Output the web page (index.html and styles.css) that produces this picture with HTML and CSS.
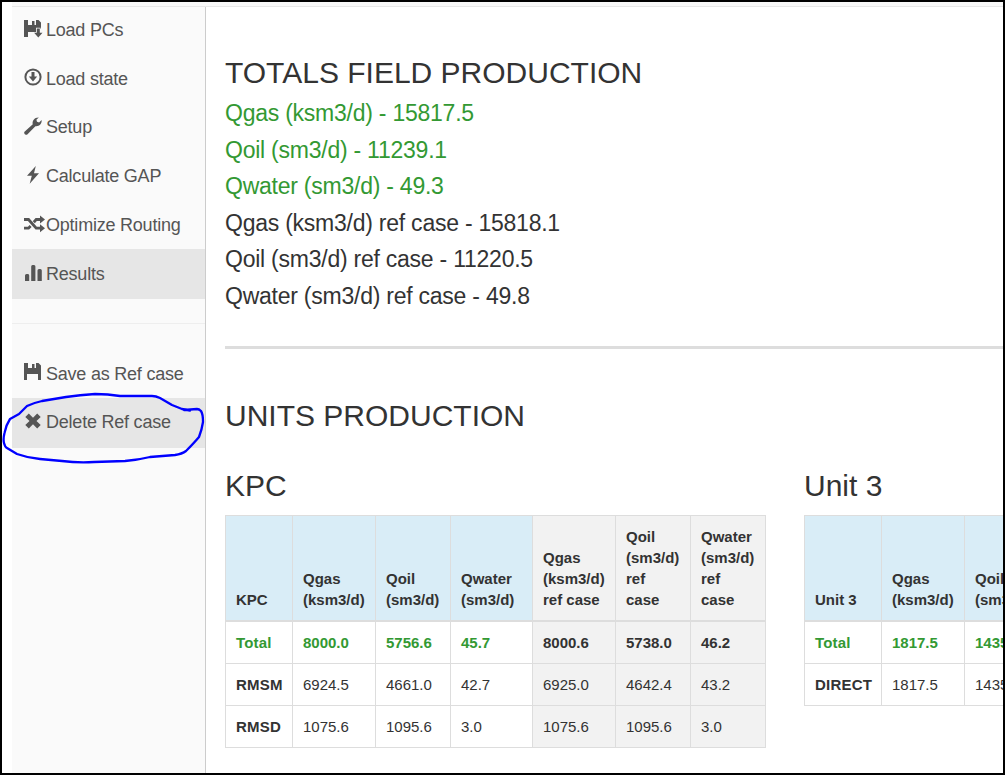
FILE: index.html
```html
<!DOCTYPE html>
<html lang="en">
<head>
<meta charset="utf-8">
<title>Results</title>
<link rel="stylesheet" href="styles.css">
</head>
<body>
<div class="frame">
  <header class="topbar"></header>
  <div class="layout">
    <nav class="sidebar">
      <a class="item"><svg class="icon wide" viewBox="0 0 22 18"><path d="M0 0H4V5H8V1H10.5V5H12V0H14.5L17 2.5V9H12V12H4V17H0Z"/><path class="halo" d="M12.8 8.5H15.8V12.8H18.5L14.3 17.6L10.1 12.8H12.8Z"/></svg><span>Load PCs</span></a>
      <a class="item"><svg class="icon" viewBox="0 0 22 18"><circle class="ring" cx="9" cy="9" r="7.6"/><path d="M7.5 4H10.5V8.5H13.2L9 13.6L4.8 8.5H7.5Z"/></svg><span>Load state</span></a>
      <a class="item"><svg class="icon" viewBox="0 0 22 18"><path d="M.5 14.7L8.8 7.3C7.8 3.8 10.5.2 14.8.4L12.4 2.8L13 4.8L15.1 5.4L17.6 3.1C18.2 7 14.8 9.8 11.4 9.2L3.3 17.4C1.8 18.6-.7 16.3.5 14.7Z"/></svg><span>Setup</span></a>
      <a class="item"><svg class="icon" viewBox="0 0 22 18"><path d="M11.8 0L3 9.8H7.8L5.7 17.8L15 7.2H10Z"/></svg><span>Calculate GAP</span></a>
      <a class="item"><svg class="icon wide" viewBox="0 0 22 18"><path class="line" d="M0 4.5H4.5L12.2 13.2H17M0 13.2H4.5L6.6 11M9.8 7.2L12.2 4.5H17"/><path d="M16 .5L21 4.5L16 8.5ZM16 9.2L21 13.2L16 17.2Z"/></svg><span>Optimize Routing</span></a>
      <a class="item active"><svg class="icon" viewBox="0 0 22 18"><path d="M1 11.5Q1 10 2.5 10H4Q5.2 10 5.2 11.5V17H1ZM7.2 2.5Q7.2 1 8.5 1H10Q11.4 1 11.4 2.5V17H7.2ZM13.5 6.5Q13.5 5 15 5H16.3Q17.8 5 17.8 6.5V17H13.5Z"/></svg><span>Results</span></a>
      <hr class="divider">
      <a class="item"><svg class="icon wide" viewBox="0 0 22 18"><path d="M0 0H4V5H8V1H10.5V5H12V0H14.5L17 2.5V17H14V11H3V17H0Z"/></svg><span>Save as Ref case</span></a>
      <a class="item active"><svg class="icon" viewBox="0 0 22 18"><path d="M4.8 1.5L9 5.7L13.2 1.5L16.7 5L12.5 9L16.7 13L13.2 16.5L9 12.3L4.8 16.5L1.3 13L5.5 9L1.3 5Z"/></svg><span>Delete Ref case</span></a>
    </nav>
    <main class="content">
      <h2 class="title">TOTALS FIELD PRODUCTION</h2>
      <div class="totals">
        <p class="current">Qgas (ksm3/d) - 15817.5</p>
        <p class="current">Qoil (sm3/d) - 11239.1</p>
        <p class="current">Qwater (sm3/d) - 49.3</p>
        <p>Qgas (ksm3/d) ref case - 15818.1</p>
        <p>Qoil (sm3/d) ref case - 11220.5</p>
        <p>Qwater (sm3/d) ref case - 49.8</p>
      </div>
      <hr class="rule">
      <h2 class="title units-title">UNITS PRODUCTION</h2>
      <div class="units">
        <section class="unit kpc">
          <h2 class="title">KPC</h2>
          <table>
            <colgroup><col class="c67"><col class="c83"><col class="c75"><col class="c82"><col class="c83"><col class="c75"><col class="c75"></colgroup>
            <thead><tr><th>KPC</th><th>Qgas<br>(ksm3/d)</th><th>Qoil<br>(sm3/d)</th><th>Qwater<br>(sm3/d)</th><th class="ref">Qgas<br>(ksm3/d)<br>ref case</th><th class="ref">Qoil<br>(sm3/d)<br>ref<br>case</th><th class="ref">Qwater<br>(sm3/d)<br>ref<br>case</th></tr></thead>
            <tbody>
              <tr class="total"><th>Total</th><td>8000.0</td><td>5756.6</td><td>45.7</td><td class="ref">8000.6</td><td class="ref">5738.0</td><td class="ref">46.2</td></tr>
              <tr><th>RMSM</th><td>6924.5</td><td>4661.0</td><td>42.7</td><td class="ref">6925.0</td><td class="ref">4642.4</td><td class="ref">43.2</td></tr>
              <tr><th>RMSD</th><td>1075.6</td><td>1095.6</td><td>3.0</td><td class="ref">1075.6</td><td class="ref">1095.6</td><td class="ref">3.0</td></tr>
            </tbody>
          </table>
        </section>
        <section class="unit unit3">
          <h2 class="title">Unit 3</h2>
          <table>
            <colgroup><col class="c77"><col class="c83"><col class="c75"></colgroup>
            <thead><tr><th>Unit 3</th><th>Qgas<br>(ksm3/d)</th><th>Qoil<br>(sm3/d)</th></tr></thead>
            <tbody>
              <tr class="total"><th>Total</th><td>1817.5</td><td>1435</td></tr>
              <tr><th>DIRECT</th><td>1817.5</td><td>1435</td></tr>
            </tbody>
          </table>
        </section>
      </div>
    </main>
  </div>
  <svg class="marker" viewBox="0 0 220 90"><path d="M190 29.5L182 28L172 24L160 17Q156 15 152 15H120Q108 13 95 13Q80 14 66 16L42 20Q33 22 27 25L19 33L10 38Q6 44 4.5 52Q3 58 4 62Q5 66 7 67L17 73Q28 77 40 78L62 80Q78 82 94 81L125 80Q138 79 150 76L175 74Q182 73 186 70Q194 62 199 56Q202 48 203 41Q203 33 201 30Q199 28 197 28L184 29"/></svg>
</div>
</body>
</html>
```
FILE: styles.css
```css
* { box-sizing: border-box; }
body { margin: 0; background: #fff; color: #333; font-family: "Liberation Sans", Arial, sans-serif; }
.frame { position: relative; width: 1005px; height: 775px; border: 2px solid #000; overflow: hidden; display: flex; flex-direction: column; }
.topbar { height: 5px; flex: none; margin-left: 10px; background: #f8f8f8; border-bottom: 1px solid #e7e7e7; }
.layout { flex: 1; min-height: 0; display: flex; padding-left: 10px; }
.sidebar { width: 194px; flex: none; background: #fafafa; border-right: 1px solid #ccc; }
.item { display: flex; align-items: center; height: 50px; margin-bottom: -1.2px; padding-left: 12px; color: #555; font-size: 18px; letter-spacing: -0.22px; white-space: nowrap; }
.item:first-child { margin-top: -2px; }
.item span { padding-top: 0.6px; }
.item.active { background: #e6e6e6; }
.icon { width: 22px; height: 18px; flex: none; margin-top: -3px; fill: #555; overflow: visible; }
.icon.wide { margin-left: -0.5px; margin-right: 0.5px; }
.ring { fill: none; stroke: #555; stroke-width: 2; }
.line { fill: none; stroke: #555; stroke-width: 2.8; }
.halo { stroke: #fafafa; stroke-width: 1.6; paint-order: stroke; }
.divider { margin: 25px 0; border: 0; border-top: 1px solid #eee; height: 1px; }
.content { flex: 1; min-width: 0; overflow: hidden; padding: 49px 0 0 19px; }
.title { margin: 0; font-size: 30px; line-height: 33px; font-weight: 400; white-space: nowrap; }
.totals { padding-top: 6px; }
.totals p { margin: 0; font-size: 23px; letter-spacing: -0.24px; line-height: 36.5px; }
.current { color: #393; }
.rule { height: 3px; margin: 32px 0 0; border: 0; background: #ddd; }
.units-title { padding-top: 50px; height: 83px; }
.units { display: flex; gap: 38px; padding-top: 37px; }
.unit { flex: none; }
.kpc { width: 541px; }
.unit3 { width: 236px; }
table { width: 100%; margin-top: 13px; border-collapse: collapse; table-layout: fixed; font-size: 15px; line-height: 21px; }
th, td { border: 1px solid #ddd; padding: 10px; text-align: left; height: 42px; white-space: nowrap; }
thead th { height: 105px; padding-top: 9px; vertical-align: bottom; background: #d9edf7; border-bottom-width: 2px; }
tbody th { letter-spacing: 0.2px; }
.total { color: #393; font-weight: 700; }
.total .ref { color: #333; }
th.ref, td.ref { background: #f2f2f2; }
.c67 { width: 67px; }
.c75 { width: 75px; }
.c77 { width: 77px; }
.c82 { width: 82px; }
.c83 { width: 83px; }
.marker { position: absolute; left: -2px; top: 379px; width: 220px; height: 90px; fill: none; stroke: #00f; stroke-width: 2.3; stroke-linejoin: round; stroke-linecap: round; }
```
